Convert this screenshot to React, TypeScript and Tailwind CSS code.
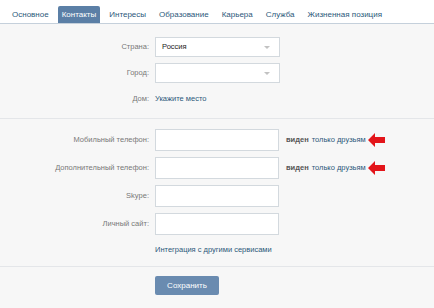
const tabs = ["Основное", "Контакты", "Интересы", "Образование", "Карьера", "Служба", "Жизненная позиция"];

function Arrow() {
  return (
    <svg width="17" height="14" viewBox="0 0 17 14" className="ml-[2px]">
      <path d="M0 7 L7 0 L7 4 L17 4 L17 10 L7 10 L7 14 Z" fill="#e3151a" />
    </svg>
  );
}

function Select({ value }: { value?: string }) {
  return (
    <div className="flex h-[20px] w-[125px] items-center justify-between border border-[#d3d9de] bg-white pl-[6px] pr-[9px] text-[#222]">
      <span>{value}</span>
      <span className="h-0 w-0 border-x-[3.5px] border-t-[3px] border-x-transparent border-t-[#c2c2c2]" />
    </div>
  );
}

function Row({ label, children, h = "h-[22px]" }: { label: string; children: React.ReactNode; h?: string }) {
  return (
    <div className={`flex items-center ${h}`}>
      <div className="w-[150px] pr-[1px] text-right text-[#777]">{label}</div>
      <div className="ml-[5px] flex items-center">{children}</div>
    </div>
  );
}

function Visible() {
  return (
    <div className="ml-[7px] flex items-center">
      <span className="font-bold text-[#555]">виден</span>
      <span className="ml-[3px] text-[#2b587a]">только друзьям</span>
      <Arrow />
    </div>
  );
}

export default function App() {
  return (
    <div className="h-[308px] w-[434px] overflow-hidden bg-[#f7f7f7] text-[7.5px] font-['Liberation_Sans',Arial,sans-serif]">
      <div className="flex h-[24px] items-end gap-[5px] border-b border-[#c5d0db] bg-white pl-[8px] text-[8px]">
        {tabs.map((t, i) => (
          <div
            key={t}
            className={
              i === 1
                ? "flex h-[17px] items-center rounded-t-[2px] bg-[#5b7fa6] px-[4px] text-white"
                : "flex h-[17px] items-center px-[4px] text-[#2b587a]"
            }
          >
            {t}
          </div>
        ))}
      </div>

      <div className="flex flex-col gap-[6px] pt-[13px]">
        <Row label="Страна:" h="h-[20px]">
          <Select value="Россия" />
        </Row>
        <Row label="Город:" h="h-[20px]">
          <Select />
        </Row>
        <Row label="Дом:" h="h-[20px]">
          <span className="text-[#2b587a]">Укажите место</span>
        </Row>
      </div>

      <div className="mt-[9px] h-px bg-[#e4e6e9]" />

      <div className="flex flex-col gap-[6px] pt-[10px]">
        <Row label="Мобильный телефон:">
          <div className="h-[22px] w-[124px] border border-[#d3d9de] bg-white" />
          <Visible />
        </Row>
        <Row label="Дополнительный телефон:">
          <div className="h-[22px] w-[124px] border border-[#d3d9de] bg-white" />
          <Visible />
        </Row>
        <Row label="Skype:">
          <div className="h-[22px] w-[124px] border border-[#d3d9de] bg-white" />
        </Row>
        <Row label="Личный сайт:">
          <div className="h-[22px] w-[124px] border border-[#d3d9de] bg-white" />
        </Row>
        <Row label="" h="h-[18px]">
          <span className="text-[#2b587a]">Интеграция с другими сервисами</span>
        </Row>
      </div>

      <div className="mt-[7px] h-px bg-[#e4e6e9]" />

      <div className="pl-[155px] pt-[9px]">
        <button className="h-[19px] w-[64px] rounded-[2px] bg-[#6a8bb0] text-[8px] text-white">Сохранить</button>
      </div>
    </div>
  );
}
